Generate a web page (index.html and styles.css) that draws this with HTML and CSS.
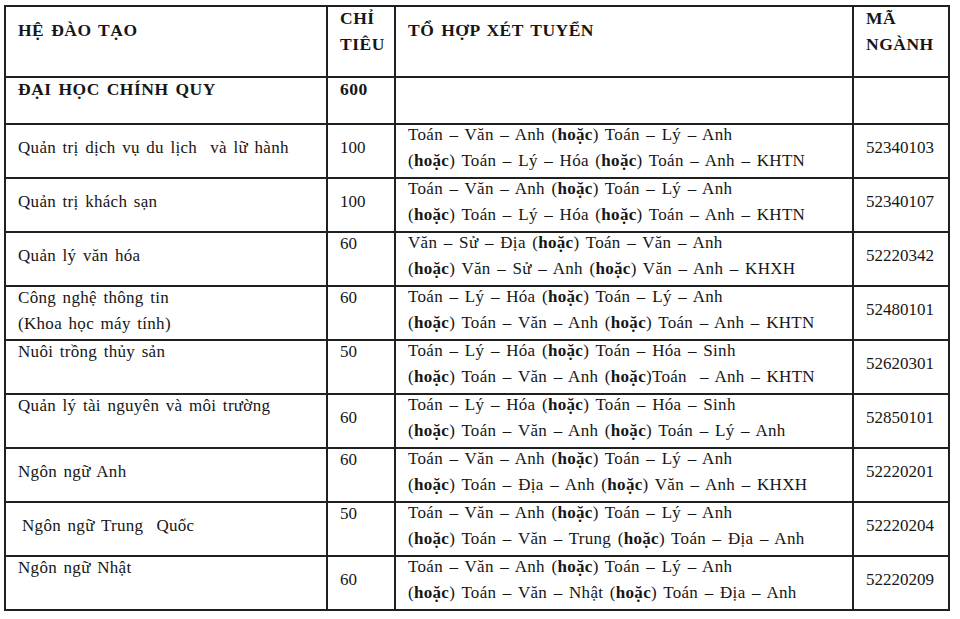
FILE: index.html
```html
<!DOCTYPE html>
<html lang="vi">
<head>
<meta charset="utf-8">
<title>Chỉ tiêu tuyển sinh</title>
<link rel="stylesheet" href="styles.css">
</head>
<body>
<div class="grid">
  <div class="row">
    <div class="cell top hd-pad"><div class="t hb">HỆ ĐÀO TẠO</div></div>
    <div class="cell top"><div class="t hb">CHỈ<br>TIÊU</div></div>
    <div class="cell top hd-pad"><div class="t hb">TỔ HỢP XÉT TUYỂN</div></div>
    <div class="cell top"><div class="t hb">MÃ<br>NGÀNH</div></div>
  </div>
  <div class="row">
    <div class="cell top"><div class="t hb">ĐẠI HỌC CHÍNH QUY</div></div>
    <div class="cell top"><div class="t hb">600</div></div>
    <div class="cell top"></div>
    <div class="cell top"></div>
  </div>
  <div class="row">
    <div class="cell mid"><div class="m">Quản trị dịch vụ du lịch &nbsp;và lữ hành</div></div>
    <div class="cell mid"><div class="m num">100</div></div>
    <div class="cell mid"><div class="m">Toán – Văn – Anh (<b>hoặc</b>) Toán – Lý – Anh<br>(<b>hoặc</b>) Toán – Lý – Hóa (<b>hoặc</b>) Toán – Anh – KHTN</div></div>
    <div class="cell mid"><div class="m num">52340103</div></div>
  </div>
  <div class="row">
    <div class="cell mid"><div class="m">Quản trị khách sạn</div></div>
    <div class="cell mid"><div class="m num">100</div></div>
    <div class="cell mid"><div class="m">Toán – Văn – Anh (<b>hoặc</b>) Toán – Lý – Anh<br>(<b>hoặc</b>) Toán – Lý – Hóa (<b>hoặc</b>) Toán – Anh – KHTN</div></div>
    <div class="cell mid"><div class="m num">52340107</div></div>
  </div>
  <div class="row">
    <div class="cell mid"><div class="m">Quản lý văn hóa</div></div>
    <div class="cell top"><div class="t num">60</div></div>
    <div class="cell mid"><div class="m">Văn – Sử – Địa (<b>hoặc</b>) Toán – Văn – Anh<br>(<b>hoặc</b>) Văn – Sử – Anh (<b>hoặc</b>) Văn – Anh – KHXH</div></div>
    <div class="cell mid"><div class="m num">52220342</div></div>
  </div>
  <div class="row">
    <div class="cell top"><div class="t">Công nghệ thông tin<br>(Khoa học máy tính)</div></div>
    <div class="cell top"><div class="t num">60</div></div>
    <div class="cell mid"><div class="m">Toán – Lý – Hóa (<b>hoặc</b>) Toán – Lý – Anh<br>(<b>hoặc</b>) Toán – Văn – Anh (<b>hoặc</b>) Toán – Anh – KHTN</div></div>
    <div class="cell mid"><div class="m num">52480101</div></div>
  </div>
  <div class="row">
    <div class="cell top"><div class="t">Nuôi trồng thủy sản</div></div>
    <div class="cell top"><div class="t num">50</div></div>
    <div class="cell mid"><div class="m">Toán – Lý – Hóa (<b>hoặc</b>) Toán – Hóa – Sinh<br>(<b>hoặc</b>) Toán – Văn – Anh (<b>hoặc</b>)Toán &nbsp;– Anh – KHTN</div></div>
    <div class="cell mid"><div class="m num">52620301</div></div>
  </div>
  <div class="row">
    <div class="cell top"><div class="t">Quản lý tài nguyên và môi trường</div></div>
    <div class="cell mid"><div class="m num">60</div></div>
    <div class="cell mid"><div class="m">Toán – Lý – Hóa (<b>hoặc</b>) Toán – Hóa – Sinh<br>(<b>hoặc</b>) Toán – Văn – Anh (<b>hoặc</b>) Toán – Lý – Anh</div></div>
    <div class="cell mid"><div class="m num">52850101</div></div>
  </div>
  <div class="row">
    <div class="cell mid"><div class="m">Ngôn ngữ Anh</div></div>
    <div class="cell top"><div class="t num">60</div></div>
    <div class="cell mid"><div class="m">Toán – Văn – Anh (<b>hoặc</b>) Toán – Lý – Anh<br>(<b>hoặc</b>) Toán – Địa – Anh (<b>hoặc</b>) Văn – Anh – KHXH</div></div>
    <div class="cell mid"><div class="m num">52220201</div></div>
  </div>
  <div class="row">
    <div class="cell mid indent"><div class="m">Ngôn ngữ Trung &nbsp;Quốc</div></div>
    <div class="cell top"><div class="t num">50</div></div>
    <div class="cell mid"><div class="m">Toán – Văn – Anh (<b>hoặc</b>) Toán – Lý – Anh<br>(<b>hoặc</b>) Toán – Văn – Trung (<b>hoặc</b>) Toán – Địa – Anh</div></div>
    <div class="cell mid"><div class="m num">52220204</div></div>
  </div>
  <div class="row">
    <div class="cell top"><div class="t">Ngôn ngữ Nhật</div></div>
    <div class="cell mid"><div class="m num">60</div></div>
    <div class="cell mid"><div class="m">Toán – Văn – Anh (<b>hoặc</b>) Toán – Lý – Anh<br>(<b>hoặc</b>) Toán – Văn – Nhật (<b>hoặc</b>) Toán – Địa – Anh</div></div>
    <div class="cell mid"><div class="m num">52220209</div></div>
  </div>
</div>
</body>
</html>
```

FILE: styles.css
```css
html, body {
  margin: 0;
  padding: 0;
  background: #ffffff;
}

body {
  font-family: "Liberation Serif", serif;
  font-size: 17px;
  line-height: 26px;
  color: #161616;
}

.grid {
  display: grid;
  grid-template-columns: 320px 66px 456px 94px;
  grid-template-rows: 69px 45px repeat(9, 52px);
  gap: 2px;
  padding: 2px;
  width: max-content;
  margin: 5px 0 0 4px;
  background: #202020;
}

.row {
  display: contents;
}

.cell {
  background: #ffffff;
  padding: 0 4px 0 12px;
  white-space: nowrap;
  display: flex;
  flex-direction: column;
  letter-spacing: 0.3px;
  word-spacing: 2px;
}

.top {
  justify-content: flex-start;
}

.mid {
  justify-content: center;
}

.t {
  margin-top: -2px;
}

.m {
  margin-top: -6px;
}

.hd-pad {
  padding-top: 12px;
}

b {
  font-weight: bold;
}

.hb {
  font-weight: bold;
  font-size: 17.5px;
  letter-spacing: 0.5px;
  word-spacing: 2px;
}

.num {
  letter-spacing: 0;
}

.indent {
  padding-left: 16px;
}
```
